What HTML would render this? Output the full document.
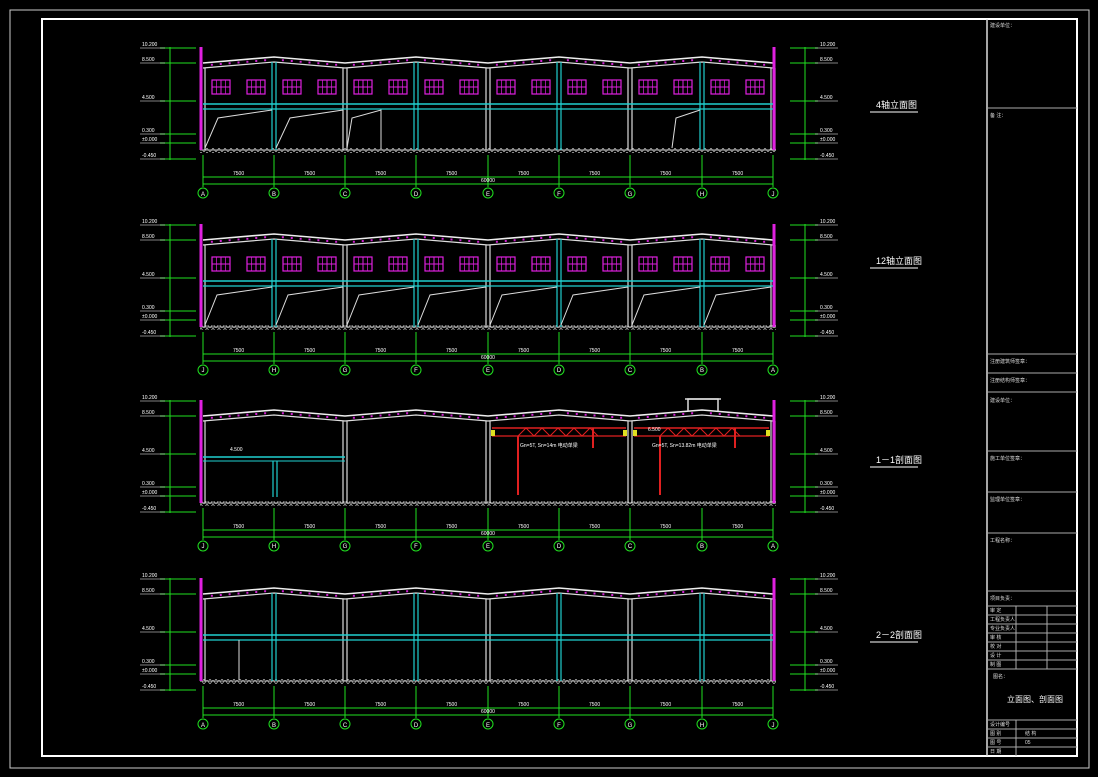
<!DOCTYPE html>
<html><head><meta charset="utf-8"><style>
html,body{margin:0;padding:0;background:#000;width:1098px;height:777px;overflow:hidden}
svg{display:block}
text{font-family:"Liberation Sans","Noto Sans CJK SC",sans-serif}
.t{fill:#ddd;font-size:5px}
.lab{fill:#fff;font-size:9px}
.ax{fill:#fff;font-size:6px;text-anchor:middle}
.el{fill:#fff;font-size:5px}
</style></head><body>
<svg id="s" width="1098" height="777" viewBox="0 0 1098 777" xmlns="http://www.w3.org/2000/svg">
<defs>
<pattern id="hatch" width="6" height="4" patternUnits="userSpaceOnUse"><path d="M0 4 L3 0 L6 4" stroke="#aaa" stroke-width="0.8" fill="none"/></pattern>
</defs>
<rect x="10" y="10" width="1079" height="758" fill="none" stroke="#ccc" stroke-width="1"/>
<rect x="42" y="19" width="1035" height="737" fill="none" stroke="#fff" stroke-width="2"/>
<line x1="987" y1="19" x2="987" y2="756" stroke="#ddd" stroke-width="1.5"/>
<g stroke="#aaa" stroke-width="1" fill="none">
<line x1="988" y1="108" x2="1077" y2="108"/>
<line x1="988" y1="354" x2="1077" y2="354"/>
<line x1="988" y1="373" x2="1077" y2="373"/>
<line x1="988" y1="392" x2="1077" y2="392"/>
<line x1="988" y1="451" x2="1077" y2="451"/>
<line x1="988" y1="492" x2="1077" y2="492"/>
<line x1="988" y1="533" x2="1077" y2="533"/>
<line x1="988" y1="591" x2="1077" y2="591"/>
<line x1="988" y1="606" x2="1077" y2="606"/>
<line x1="988" y1="615" x2="1077" y2="615"/>
<line x1="988" y1="624" x2="1077" y2="624"/>
<line x1="988" y1="633" x2="1077" y2="633"/>
<line x1="988" y1="642" x2="1077" y2="642"/>
<line x1="988" y1="651" x2="1077" y2="651"/>
<line x1="988" y1="660" x2="1077" y2="660"/>
<line x1="988" y1="669" x2="1077" y2="669"/>
<line x1="988" y1="720" x2="1077" y2="720"/>
<line x1="988" y1="729" x2="1077" y2="729"/>
<line x1="988" y1="738" x2="1077" y2="738"/>
<line x1="988" y1="747" x2="1077" y2="747"/>
<line x1="1016" y1="606" x2="1016" y2="669"/>
<line x1="1047" y1="606" x2="1047" y2="669"/>
<line x1="1016" y1="720" x2="1016" y2="756"/>
</g>
<g class="t">
<text x="990" y="27">建设单位：</text>
<text x="990" y="117">备 注：</text>
<text x="990" y="363">注册建筑师签章：</text>
<text x="990" y="382">注册结构师签章：</text>
<text x="990" y="402">建设单位：</text>
<text x="990" y="460">施工单位签章：</text>
<text x="990" y="501">监理单位签章：</text>
<text x="990" y="542">工程名称：</text>
<text x="990" y="600">项目负责：</text>
<text x="990" y="612">审 定</text><text x="990" y="621">工程负责人</text><text x="990" y="630">专业负责人</text>
<text x="990" y="639">审 核</text><text x="990" y="648">校 对</text><text x="990" y="657">设 计</text><text x="990" y="666">制 图</text>
<text x="993" y="678">图名：</text>
<text x="990" y="726">设计编号</text><text x="990" y="735">图 别</text><text x="990" y="744">图 号</text><text x="990" y="753">日 期</text>
<text x="1025" y="735">结 构</text><text x="1025" y="744">05</text>
</g>
<text x="1007" y="702" style="fill:#fff;font-size:8px">立面图、剖面图</text>
<text x="876" y="108" class="lab">4轴立面图</text><line x1="870" y1="112" x2="918" y2="112" stroke="#fff"/>
<text x="876" y="264" class="lab">12轴立面图</text><line x1="870" y1="268" x2="918" y2="268" stroke="#fff"/>
<text x="876" y="463" class="lab">1－1剖面图</text><line x1="870" y1="467" x2="918" y2="467" stroke="#fff"/>
<text x="876" y="638" class="lab">2－2剖面图</text><line x1="870" y1="642" x2="918" y2="642" stroke="#fff"/>
<g id="g"></g>
<g id="txt">
<text class="ax" x="203" y="196">A</text><text class="ax" x="274" y="196">B</text><text class="ax" x="345" y="196">C</text><text class="ax" x="416" y="196">D</text><text class="ax" x="488" y="196">E</text><text class="ax" x="559" y="196">F</text><text class="ax" x="630" y="196">G</text><text class="ax" x="702" y="196">H</text><text class="ax" x="773" y="196">J</text>
<text class="ax" x="203" y="372">J</text><text class="ax" x="274" y="372">H</text><text class="ax" x="345" y="372">G</text><text class="ax" x="416" y="372">F</text><text class="ax" x="488" y="372">E</text><text class="ax" x="559" y="372">D</text><text class="ax" x="630" y="372">C</text><text class="ax" x="702" y="372">B</text><text class="ax" x="773" y="372">A</text>
<text class="ax" x="203" y="548">J</text><text class="ax" x="274" y="548">H</text><text class="ax" x="345" y="548">G</text><text class="ax" x="416" y="548">F</text><text class="ax" x="488" y="548">E</text><text class="ax" x="559" y="548">D</text><text class="ax" x="630" y="548">C</text><text class="ax" x="702" y="548">B</text><text class="ax" x="773" y="548">A</text>
<text class="ax" x="203" y="727">A</text><text class="ax" x="274" y="727">B</text><text class="ax" x="345" y="727">C</text><text class="ax" x="416" y="727">D</text><text class="ax" x="488" y="727">E</text><text class="ax" x="559" y="727">F</text><text class="ax" x="630" y="727">G</text><text class="ax" x="702" y="727">H</text><text class="ax" x="773" y="727">J</text>
<text x="652" y="447" style="fill:#fff;font-size:5px">Gn=5T, Sn=13.82m 电动单梁</text>
<text x="520" y="447" style="fill:#fff;font-size:5px">Gn=5T, Sn=14m 电动单梁</text>
<text x="648" y="431" style="fill:#fff;font-size:5px">6.500</text>
<text x="230" y="451" style="fill:#fff;font-size:5px">4.500</text>
</g>
</svg>
<script>
var g=document.getElementById('g'),ns='http://www.w3.org/2000/svg';
function el(t,a,txt){var e=document.createElementNS(ns,t);for(var k in a)e.setAttribute(k,a[k]);if(txt){e.textContent=txt;}g.appendChild(e);return e;}
function L(x1,y1,x2,y2,c,w){el('line',{x1:x1,y1:y1,x2:x2,y2:y2,stroke:c,'stroke-width':w||1});}
var X=[203,274,345,416,488,559,630,702,773];
var offs=[0,177,353,531];
offs.forEach(function(o,si){
 var roofV=63+o,roofP=57+o,gr=150+o;
 // roof
 var p='',p2='';X.forEach(function(x,i){var y=(i%2?roofP:roofV);p+=x+','+y+' ';p2+=x+','+(y+5)+' ';});
 el('polyline',{points:p,fill:'none',stroke:'#eee','stroke-width':1.6});
 el('polyline',{points:p2,fill:'none',stroke:'#ddd','stroke-width':1.2});
 for(var i=0;i<8;i++){for(var k=1;k<8;k++){var x=X[i]+k*71/8;var f=k/8;var y=(i%2?roofP+(roofV-roofP)*f:roofV+(roofP-roofV)*f)+2.5;el('rect',{x:x-1,y:y-1,width:2,height:2,fill:'#d020d0'});}}
 // ground
 el('rect',{x:200,y:gr-2,width:576,height:5,fill:'url(#hatch)'});
 L(200,gr,776,gr,'#bbb',1);
 // columns
 X.forEach(function(x,i){
  var top=(i%2?roofP:roofV)+5;
  var cyan=(si<2||si==3)&&(i%2==1);
  if(si==2&&i%2==1) return;
  var c=cyan?'#20d0d0':'#ddd';
  L(x-2,top,x-2,gr,c,1.2);L(x+2,top,x+2,gr,c,1.2);
 });
 // end magenta
 L(201,top0=roofV-16,201,gr,'#e020e0',3);L(774,roofV-16,774,gr,'#e020e0',3);
 // windows
 if(si<2){for(var i=0;i<8;i++){[9,44].forEach(function(d){var x=X[i]+d,y=80+o;el('rect',{x:x,y:y,width:18,height:14,fill:'none',stroke:'#e020e0','stroke-width':1.2});L(x+9,y,x+9,y+14,'#e020e0',1);L(x+4.5,y,x+4.5,y+14,'#e020e0',0.7);L(x+13.5,y,x+13.5,y+14,'#e020e0',0.7);L(x,y+7,x+18,y+7,'#e020e0',1);});}}
 // cyan beam
 if(si!=2){L(203,104+o,773,104+o,'#20d0d0',1.5);L(203,109+o,773,109+o,'#20d0d0',1.2);}
 // left elevation
 var ly=[45,60,98,131,140,156];var lt=['10.200','8.500','4.500','0.300','±0.000','-0.450'];
 L(170,47+o,170,160+o,'#20e020',1);L(805,47+o,805,160+o,'#20e020',1);
 ly.forEach(function(y,j){L(160,y+3+o,196,y+3+o,'#20e020',1);el('text',{x:142,y:y+1+o,'class':'el'},lt[j]);L(140,y+3+o,165,y+3+o,'#fff',0.6);
  L(790,y+3+o,818,y+3+o,'#20e020',1);el('text',{x:820,y:y+1+o,'class':'el'},j==0?'10.200':lt[j]);L(815,y+3+o,838,y+3+o,'#fff',0.6);});
 // dims
 L(203,177+o,773,177+o,'#20e020',1);L(203,184+o,773,184+o,'#20e020',1);
 X.forEach(function(x,i){L(x,155+o,x,187+o,'#20e020',1);el('circle',{cx:x,cy:193+o,r:5,fill:'none',stroke:'#20e020','stroke-width':1});
  if(i<8)el('text',{x:x+30,y:175+o,'class':'el'},'7500');});
 el('text',{x:481,y:182+o,'class':'el'},'60000');
});
// section 1 doors
[[205,148,235,118,395,104],[276,148,300,118,480,104]].forEach(function(a){});
el('polyline',{points:'205,148 218,118 272,110',fill:'none',stroke:'#ddd'});
el('polyline',{points:'276,148 290,118 343,110',fill:'none',stroke:'#ddd'});
el('polyline',{points:'347,148 352,118 381,110 381,148',fill:'none',stroke:'#ddd'});
el('polyline',{points:'672,148 676,118 700,110',fill:'none',stroke:'#ddd'});
// section 2 doors
for(var i=0;i<8;i++){el('polyline',{points:(X[i]+2)+',325 '+(X[i]+14)+',295 '+(X[i+1]-2)+',287',fill:'none',stroke:'#ddd'});}
// section 3 mezzanine
L(203,457,345,457,'#20d0d0',1.5);L(203,461,345,461,'#20d0d0',1);L(273,461,273,497,'#20d0d0',1.2);L(277,461,277,497,'#20d0d0',1.2);
// cranes
[[488,630],[630,773]].forEach(function(s){var a=s[0],b=s[1];
 L(a+4,428,b-4,428,'#e02020',1.5);L(a+4,436,b-4,436,'#e02020',1.2);
 var p='';for(var x=a+30;x<b-30;x+=8){p+=x+','+(x%16<8?436:428)+' ';}el('polyline',{points:p,fill:'none',stroke:'#e02020','stroke-width':1});
 L(a+30,436,a+30,495,'#e02020',2);L(a+105,428,a+105,448,'#e02020',2);
 el('rect',{x:a+3,y:430,width:4,height:6,fill:'#e0e020'});el('rect',{x:b-7,y:430,width:4,height:6,fill:'#e0e020'});});
// monitor
el('polyline',{points:'688,411 688,399 718,399 718,411',fill:'none',stroke:'#ddd','stroke-width':1.5});L(685,399,721,399,'#ddd',1.5);
// section 4 short post
L(239,640,239,680,'#ddd',1);
</script>
</body></html>
